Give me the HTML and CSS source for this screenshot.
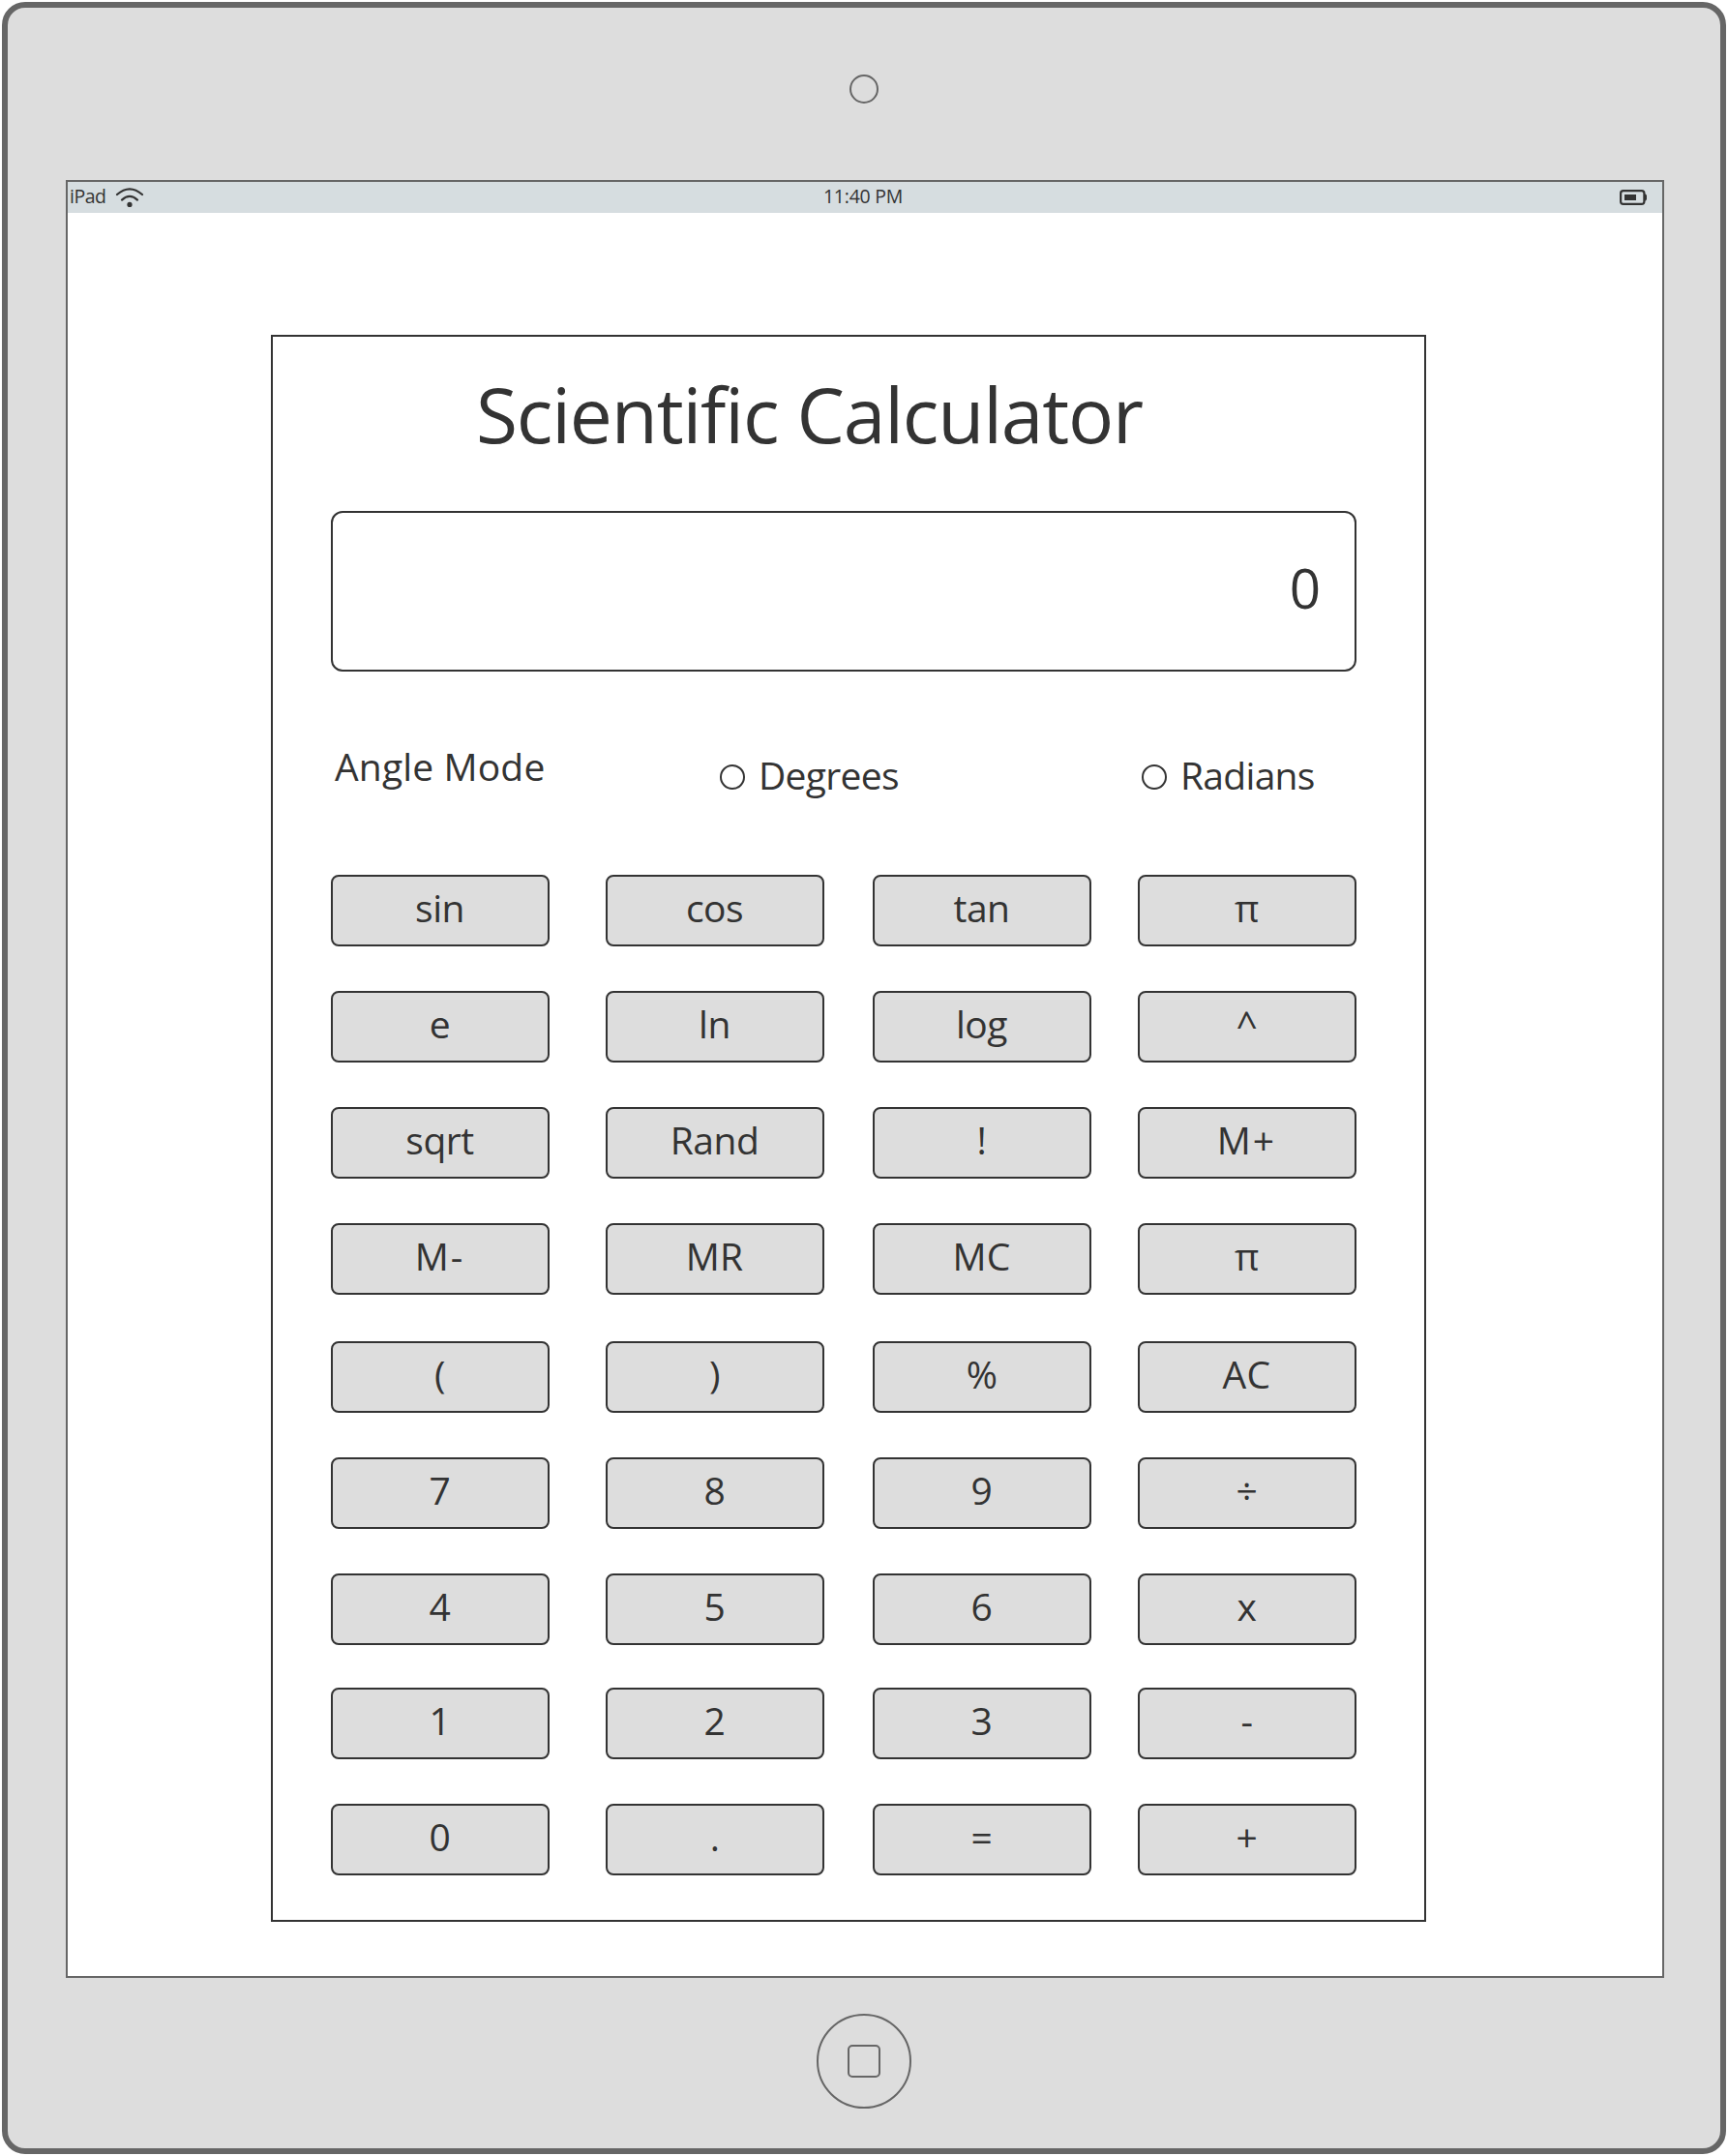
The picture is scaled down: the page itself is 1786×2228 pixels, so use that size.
FILE: index.html
```html
<!DOCTYPE html>
<html lang="en">
<head>
<meta charset="utf-8">
<title>Scientific Calculator</title>
<link rel="stylesheet" href="styles.css">
</head>
<body>
<div class="device">
  <div class="bezel-top"><div class="camera"></div></div>
  <div class="screen">
    <div class="status">
      <div class="carrier">
        <span>iPad</span>
        <svg class="wifi" width="30" height="22" viewBox="0 0 30 22" fill="none" stroke="#333" stroke-width="2.2" stroke-linecap="round">
          <path d="M2 8Q15-3.4 28 8M7 13.6Q15 6.2 23 13.6"/>
          <circle cx="15" cy="18.4" r="2.6" fill="#333" stroke="none"/>
        </svg>
      </div>
      <span class="time">11:40 PM</span>
      <div class="power">
        <svg width="28" height="16" viewBox="0 0 28 16">
          <rect x="1.1" y="1.1" width="24.3" height="13.8" rx="2.6" fill="none" stroke="#333" stroke-width="2.2"/>
          <rect x="5" y="5" width="12" height="6" fill="#333"/>
          <path d="M25.5 4.5h1.5l1 1.5v4l-1 1.5h-1.5z" fill="#333"/>
        </svg>
      </div>
    </div>
    <main class="calculator">
      <h1 class="title">Scientific Calculator</h1>
      <div class="display">0</div>
      <div class="modes">
        <div class="mode-label">Angle Mode</div>
        <div class="option"><span class="radio"></span><span>Degrees</span></div>
        <div class="option"><span class="radio"></span><span>Radians</span></div>
      </div>
      <div class="keys">
        <div class="row"><div class="key">sin</div><div class="key">cos</div><div class="key">tan</div><div class="key">π</div></div>
        <div class="row"><div class="key">e</div><div class="key">ln</div><div class="key">log</div><div class="key">^</div></div>
        <div class="row"><div class="key">sqrt</div><div class="key">Rand</div><div class="key">!</div><div class="key key-loose">M+</div></div>
        <div class="row row-wide"><div class="key key-loose">M-</div><div class="key key-caps">MR</div><div class="key key-caps">MC</div><div class="key">π</div></div>
        <div class="row"><div class="key">(</div><div class="key">)</div><div class="key">%</div><div class="key key-caps">AC</div></div>
        <div class="row"><div class="key">7</div><div class="key">8</div><div class="key">9</div><div class="key">÷</div></div>
        <div class="row row-tight"><div class="key">4</div><div class="key">5</div><div class="key">6</div><div class="key">x</div></div>
        <div class="row"><div class="key">1</div><div class="key">2</div><div class="key">3</div><div class="key">-</div></div>
        <div class="row"><div class="key">0</div><div class="key">.</div><div class="key">=</div><div class="key">+</div></div>
      </div>
    </main>
  </div>
  <div class="bezel-bottom"><div class="home"><div class="home-mark"></div></div></div>
</div>
</body>
</html>
```
FILE: styles.css
```css
* { box-sizing: border-box; }

body {
  margin: 0;
  padding: 2px;
  background: #fff;
  color: #333;
  font-family: "Open Sans", "Noto Sans", sans-serif;
}

.device {
  width: 1782px;
  height: 2224px;
  border: 6px solid #666;
  border-radius: 24px;
  background: #ddd;
  display: flex;
  flex-direction: column;
}

.bezel-top {
  height: 178px;
  padding-top: 69px;
  display: flex;
  justify-content: center;
}

.camera {
  width: 30px;
  height: 30px;
  border: 2px solid #666;
  border-radius: 50%;
}

.screen {
  width: 1652px;
  height: 1858px;
  margin-left: 60px;
  border: 2px solid #666;
  background: #fff;
}

.status {
  height: 32px;
  background: #d6dde0;
  display: grid;
  grid-template-columns: 1fr auto 1fr;
  font-size: 19.5px;
  line-height: 30px;
}

.carrier {
  display: flex;
  gap: 10px;
  padding-left: 2px;
  letter-spacing: -0.5px;
}

.wifi { margin-top: 5px; }

.time {
  padding-right: 4px;
  letter-spacing: -0.25px;
}

.power {
  display: flex;
  justify-content: flex-end;
  padding: 8px 16px 0 0;
}

.calculator {
  width: 1194px;
  height: 1640px;
  margin: 126px 0 0 210px;
  padding: 0 70px 0 60px;
  border: 2px solid #333;
}

.title {
  height: 180px;
  margin: 0;
  padding-left: 150px;
  font-size: 78.5px;
  font-weight: 400;
  line-height: 159px;
  letter-spacing: -1.2px;
  white-space: nowrap;
}

.display {
  height: 166px;
  padding-right: 35px;
  border: 2px solid #333;
  border-radius: 12px;
  font-size: 56.5px;
  line-height: 156px;
  text-align: right;
}

.modes {
  height: 210px;
  display: grid;
  grid-template-columns: 402px 436px 1fr;
  align-items: start;
  font-size: 39px;
  line-height: 60px;
  white-space: nowrap;
}

.mode-label {
  padding: 68px 0 0 4px;
  letter-spacing: 0.15px;
}

.option {
  display: flex;
  align-items: center;
  gap: 14px;
  padding-top: 77px;
  letter-spacing: -0.7px;
}

.radio {
  width: 26px;
  height: 26px;
  margin-top: 4px;
  border: 2px solid #333;
  border-radius: 50%;
}

.keys {
  display: flex;
  flex-direction: column;
}

.row {
  display: grid;
  grid-template-columns: 284px 276px 274px 226px;
  height: 120px;
}

.row-wide { height: 122px; }

.row-tight { height: 118px; }

.key {
  width: 226px;
  height: 74px;
  padding-right: 1px;
  border: 2px solid #333;
  border-radius: 8px;
  background: #ddd;
  font-size: 39px;
  line-height: 63px;
  letter-spacing: -0.5px;
  text-align: center;
}

.key-caps { letter-spacing: 0.3px; }

.key-loose { letter-spacing: 2px; }

.bezel-bottom {
  display: flex;
  justify-content: center;
  padding-top: 37px;
}

.home {
  width: 98px;
  height: 98px;
  border: 2px solid #666;
  border-radius: 50%;
  display: flex;
  align-items: center;
  justify-content: center;
}

.home-mark {
  width: 34px;
  height: 34px;
  border: 2px solid #666;
  border-radius: 5px;
}
```
